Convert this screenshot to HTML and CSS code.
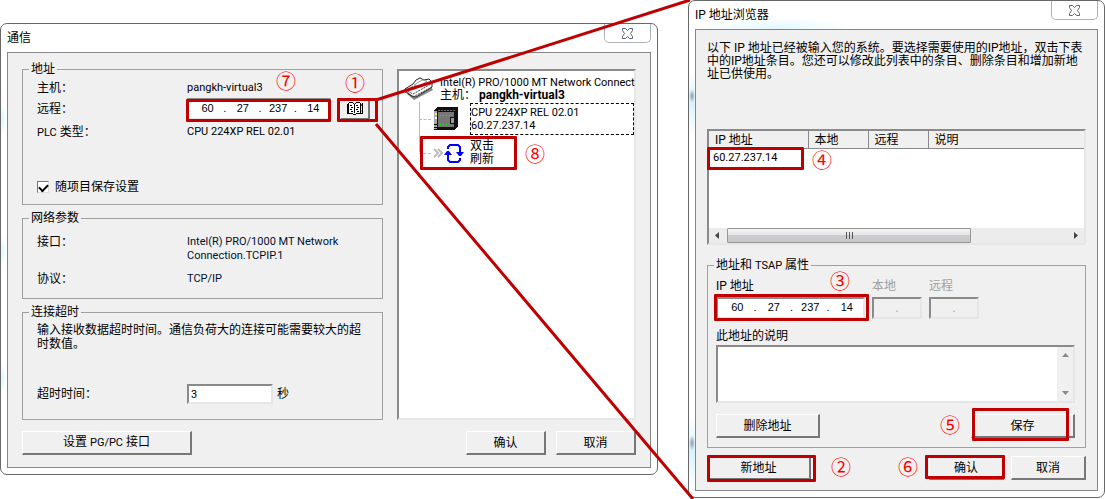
FILE: index.html
```html
<!DOCTYPE html>
<html lang="zh-CN">
<head>
<meta charset="utf-8">
<title>通信</title>
<link rel="stylesheet" href="styles.css">
</head>
<body>
<main class="stage">
  <section class="window window-comm" aria-label="通信">
    <header class="titlebar">
      <h1 class="title">通信</h1>
      <button class="close" type="button" aria-label="关闭">
        <svg width="13" height="11" viewBox="0 0 13 11"><path d="M1.500 .5h3l2 2 2-2h3v2l-2 3 2 3v2h-3l-2-2-2 2h-3v-2l2-3-2-3z" fill="#fff" stroke="#5a6078"/></svg>
      </button>
    </header>
    <div class="body comm-body">
      <div class="comm-columns">
        <div class="groups">
          <fieldset class="group">
            <legend>地址</legend>
            <div class="address-rows">
              <span>主机：</span>
              <span class="host latin">pangkh-virtual3<span class="mark mark-7">⑦</span></span>
              <span>远程：</span>
              <span class="remote">
                <span class="anchor">
                  <span class="sunken ip ip-left">
                    <input aria-label="远程 1" value="60"><i>.</i><input aria-label="远程 2" value="27"><i>.</i><input aria-label="远程 3" value="237"><i>.</i><input aria-label="远程 4" value="14">
                  </span>
                  <span class="frame frame-remote"></span>
                </span>
                <span class="anchor">
                  <button class="btn book" type="button" aria-label="地址簿">
                    <svg width="16" height="13" viewBox="0 0 16 13" shape-rendering="crispEdges"><path d="M2 1h4v1h1v1h1V2h1V1h4v10H9v1H6v-1H2z" fill="#fff"/><path d="M2 0h4v1H2zM9 0h4v1H9zM6 1h1v1H6zM8 1h1v1H8zM7 2h1v9H7zM1 1h1v10H1zM0 2h1v10H0zM13 1h1v10h-1zM0 11h6v1H0zM9 11h6v1H9zM6 12h3v1H6zM3 3h2v1H3zM4 5h2v1H4zM3 7h2v1H3zM4 9h2v1H4zM9 3h2v1H9zM10 5h2v1h-2zM9 7h2v1H9zM10 9h2v1h-2zM15 1h1v11h-1z"/><path d="M14 2h1v2h-1z" fill="red"/><path d="M14 5h1v2h-1z" fill="#ff0"/><path d="M14 8h1v2h-1z" fill="#0ff"/></svg>
                  </button>
                  <span class="frame frame-book"></span>
                  <span class="mark mark-1">①</span>
                </span>
              </span>
              <span><span class="latin">PLC</span> 类型：</span>
              <span class="latin">CPU 224XP REL 02.01</span>
            </div>
            <label class="save-project"><input type="checkbox" checked>随项目保存设置</label>
          </fieldset>
          <fieldset class="group">
            <legend>网络参数</legend>
            <div class="network-rows">
              <span>接口：</span>
              <span class="latin">Intel(R) PRO/1000 MT Network<br>Connection.TCPIP.1</span>
              <span>协议：</span>
              <span class="latin">TCP/IP</span>
            </div>
          </fieldset>
          <fieldset class="group">
            <legend>连接超时</legend>
            <p class="timeout-note">输入接收数据超时时间。通信负荷大的连接可能需要较大的超时数值。</p>
            <div class="timeout-row">
              <label for="timeout">超时时间：</label>
              <input class="sunken timeout latin" id="timeout" value="3">
              <span>秒</span>
            </div>
          </fieldset>
        </div>
        <div class="sunken tree">
          <div class="node node-root">
            <svg width="30" height="24" viewBox="0 0 30 24"><path d="M3 17l7 6 19-10-2-3-15 7z" fill="#888"/><path d="M1 12l8-5 3-4 4-2 4 2 5-1 3 3v5l-16 10-4-1-7-5z" fill="#fff" stroke="#222"/><path d="M1 13l8 4 18-10M1 15l8 5 19-10" fill="none" stroke="#444" stroke-dasharray="2 1"/><path d="M10 8l8-5 5 1-8 6zM4 12l5-3" fill="#fff" stroke="#999"/></svg>
            <div class="root-text"><span class="latin">Intel(R) PRO/1000 MT Network Connect</span><br>主机： <b>pangkh-virtual3</b></div>
          </div>
          <div class="branches">
            <div class="node">
              <svg class="plc" width="26" height="24" viewBox="0 0 26 24" shape-rendering="crispEdges"><path d="M1 3l3-3h21v19l-3 3v1H1z" fill="#111"/><path d="M5 5h16v15H5z" fill="#777"/><path d="M1 4h3v18H1z" fill="#aaa"/><path d="M2 6h2v2H2z" fill="#ff0"/><path d="M2 10h2v2H2z" fill="#fff"/><path d="M1 17h3M1 20h3" stroke="#000"/><path d="M7 8.500h11M7 17.500h11" stroke="#0f0" stroke-dasharray="1 2"/><path d="M5 3.500h17" stroke="#666" stroke-dasharray="2 1"/><path d="M17.500 10.500h4v6h-4z" fill="#999" stroke="#111"/></svg>
              <div class="node-text selected latin">CPU 224XP REL 02.01<br>60.27.237.14</div>
            </div>
            <div class="node node-refresh">
              <svg class="chevrons" width="10" height="10" viewBox="0 0 10 10"><path d="M1 1l4 4-4 4M5 1l4 4-4 4" fill="none" stroke="#bbb" stroke-width="2"/></svg>
              <svg class="refresh" width="20" height="21" viewBox="0 0 20 21" fill="none" stroke="#00f" stroke-width="2"><path d="M4 6V4l2-2h8l2 2v6M16 15v2l-2 2H6l-2-2v-6"/><path d="M12 9h8l-3 4h-2zM0 12h8L5 8H3z" fill="#00f" stroke="none"/></svg>
              <div class="node-text">双击<br>刷新</div>
              <span class="frame frame-refresh"></span>
              <span class="mark mark-8">⑧</span>
            </div>
          </div>
        </div>
      </div>
      <div class="actions">
        <button class="btn btn-pgpc" type="button">设置 <span class="latin">PG/PC</span> 接口</button>
        <button class="btn btn-dialog" type="button">确认</button>
        <button class="btn btn-dialog" type="button">取消</button>
      </div>
    </div>
  </section>

  <section class="window window-ip" aria-label="IP 地址浏览器">
    <header class="titlebar">
      <h1 class="title">IP 地址浏览器</h1>
      <button class="close" type="button" aria-label="关闭">
        <svg width="13" height="11" viewBox="0 0 13 11"><path d="M1.500 .5h3l2 2 2-2h3v2l-2 3 2 3v2h-3l-2-2-2 2h-3v-2l2-3-2-3z" fill="#fff" stroke="#5a6078"/></svg>
      </button>
    </header>
    <div class="body ip-body">
      <p class="intro">以下 IP 地址已经被输入您的系统。要选择需要使用的IP地址，双击下表中的IP地址条目。您还可以修改此列表中的条目、删除条目和增加新地址已供使用。</p>
      <div class="sunken list">
        <table class="addresses">
          <thead><tr><th class="col-ip">IP 地址</th><th class="col-tsap">本地</th><th class="col-tsap">远程</th><th>说明</th></tr></thead>
          <tbody><tr><td class="anchor latin">60.27.237.14<span class="frame frame-row"></span><span class="mark mark-4">④</span></td><td></td><td></td><td></td></tr></tbody>
        </table>
        <div class="hscroll">
          <svg width="18" height="15" viewBox="0 0 18 15"><path d="M10 4v7L6 7.500z" fill="#444"/></svg>
          <div class="track"><div class="thumb"><svg width="9" height="7" viewBox="0 0 9 7"><path d="M1.500 0v7M4.500 0v7M7.500 0v7" stroke="#555"/></svg></div></div>
          <svg width="18" height="15" viewBox="0 0 18 15"><path d="M8 4v7l4-3.500z" fill="#444"/></svg>
        </div>
      </div>
      <fieldset class="group tsap">
        <legend>地址和 <span class="latin">TSAP</span> 属性</legend>
        <div class="tsap-fields">
          <div class="field field-ip anchor">
            <span>IP 地址</span>
            <span class="anchor">
              <span class="sunken ip ip-right">
                <input aria-label="IP 地址 1" value="60"><i>.</i><input aria-label="IP 地址 2" value="27"><i>.</i><input aria-label="IP 地址 3" value="237"><i>.</i><input aria-label="IP 地址 4" value="14">
              </span>
              <span class="frame frame-ip"></span>
            </span>
            <span class="mark mark-3">③</span>
          </div>
          <div class="field field-tsap">
            <label for="local">本地</label>
            <input class="sunken" id="local" value="." disabled>
          </div>
          <div class="field field-tsap">
            <label for="remote">远程</label>
            <input class="sunken" id="remote" value="." disabled>
          </div>
        </div>
        <div class="describe">
          <label for="note">此地址的说明</label>
          <div class="sunken memo">
            <textarea id="note"></textarea>
            <div class="vscroll">
              <svg width="16" height="16" viewBox="0 0 16 16"><path d="M5 10h7L8.500 6z" fill="#888"/></svg>
              <svg width="16" height="16" viewBox="0 0 16 16"><path d="M5 6h7l-3.500 4z" fill="#888"/></svg>
            </div>
          </div>
        </div>
        <div class="row-buttons">
          <button class="btn btn-edit" type="button">删除地址</button>
          <span class="anchor">
            <button class="btn btn-edit" type="button">保存</button>
            <span class="frame frame-save"></span>
            <span class="mark mark-5">⑤</span>
          </span>
        </div>
      </fieldset>
      <div class="ip-actions">
        <span class="anchor anchor-new">
          <button class="btn btn-edit" type="button">新地址</button>
          <span class="frame frame-new"></span>
          <span class="mark mark-2">②</span>
        </span>
        <span class="anchor">
          <button class="btn btn-small" type="button">确认</button>
          <span class="frame frame-ok"></span>
          <span class="mark mark-6">⑥</span>
        </span>
        <button class="btn btn-small" type="button">取消</button>
      </div>
    </div>
  </section>

  <svg class="callout" viewBox="0 0 1105 499" preserveAspectRatio="none" aria-hidden="true">
    <path d="M376 100L690 0M376 124L693 499"/>
  </svg>
</main>
</body>
</html>
```

FILE: styles.css
```css
* {
  box-sizing: border-box;
}

body {
  margin: 0;
  background: #fff;
  color: #000;
  font: 12px/14px Roboto, "Noto Sans CJK SC", sans-serif;
}

button,
input,
textarea {
  margin: 0;
  padding: 0;
  color: inherit;
  font: inherit;
}

p {
  margin: 0;
}

svg {
  display: block;
  flex: none;
}

.stage {
  position: relative;
  display: grid;
  grid-template-columns: minmax(0, 658fr) minmax(0, 417fr);
  column-gap: 30px;
  align-items: start;
  padding-bottom: 1px;
}

/* Windows */
.window {
  padding: 0 6px 6px;
  border: 1px solid #686868;
  border-radius: 7px;
  background: #fff;
}

.window-comm {
  margin-top: 23px;
  background:
    radial-gradient(ellipse at left, #d5f7fb, transparent 70%) 0 78px / 6px 34px no-repeat,
    radial-gradient(ellipse at left, #d5f7fb, transparent 70%) 0 212px / 6px 30px no-repeat,
    radial-gradient(ellipse at left, #d5f7fb, transparent 70%) 0 340px / 6px 28px no-repeat,
    #fff;
}

.window-ip {
  background:
    radial-gradient(ellipse, #8797b0, transparent 70%) 0 88px / 6px 14px no-repeat,
    linear-gradient(transparent, #dcf3fc, transparent) 0 70px / 6px 66px no-repeat,
    radial-gradient(ellipse, #8797b0, transparent 70%) 0 434px / 6px 16px no-repeat,
    linear-gradient(transparent, #d9f3fc, transparent) 0 415px / 6px 72px no-repeat,
    radial-gradient(ellipse, #e3f8fd, transparent 70%) 10px 16px / 156px 22px no-repeat,
    #fff;
}

.titlebar {
  display: flex;
  justify-content: space-between;
  align-items: flex-start;
  height: 28px;
}

.title {
  margin: 0;
  font-size: 12px;
  font-weight: 400;
  line-height: 28px;
}

.close {
  display: grid;
  place-items: center;
  width: 47px;
  height: 19px;
  border: 1px solid #aeb2b8;
  border-top: 0;
  border-radius: 0 0 5px 5px;
  background: #fff;
}

.body {
  border: 1px solid #858585;
  background: #f0f0f0;
}

/* Shared controls */
.latin {
  font-size: 11px;
}

.group {
  min-width: 0;
  margin: 0;
  padding: 0 14px;
  border: 1px solid #a0a0a0;
}

.group legend {
  height: 14px;
  margin-left: -8px;
  padding: 0 2px;
}

.sunken {
  border: 2px solid;
  border-color: #8a8a8a #e6e6e6 #e6e6e6 #8a8a8a;
  border-radius: 0;
  background: #fff;
}

.btn {
  height: 24px;
  border: solid;
  border-width: 1px 2px 2px 1px;
  border-color: #fff #777 #777 #fff;
  background: #f0f0f0;
}

.anchor {
  position: relative;
}

.ip {
  display: flex;
  height: 22px;
  padding-left: 3px;
  font: 11px/16px "Liberation Sans", sans-serif;
}

.ip input {
  flex: 1;
  min-width: 0;
  height: 16px;
  border: 0;
  background: transparent;
  text-align: center;
}

.ip i {
  width: 4px;
  font-style: normal;
}

/* Red annotations */
.frame {
  position: absolute;
  border: 3px solid #c00000;
  border-radius: 1px;
  pointer-events: none;
}

.mark {
  position: absolute;
  color: #f00;
  font: 20px/20px "Noto Sans CJK SC", sans-serif;
}

.callout {
  position: absolute;
  inset: 0;
  width: 100%;
  height: 100%;
  pointer-events: none;
  fill: none;
  stroke: #c00000;
  stroke-width: 3;
}

/* Communication window */
.comm-body {
  padding: 9px 14px 12px;
}

.comm-columns {
  display: grid;
  grid-template-columns: minmax(0, 361fr) minmax(0, 239fr);
  column-gap: 14px;
}

.groups {
  display: flex;
  flex-direction: column;
  gap: 6px;
}

.address-rows {
  display: grid;
  grid-template-columns: 150px 1fr;
  grid-template-rows: 20px 22px 24px;
  align-items: center;
  padding-top: 2px;
}

.host {
  position: relative;
}

.remote {
  display: flex;
  gap: 9px;
}

.ip-left {
  width: 144px;
}

.book {
  display: grid;
  place-items: center;
  width: 30px;
  height: 22px;
}

.save-project {
  display: flex;
  align-items: center;
  gap: 6px;
  height: 18px;
  margin: 34px 0 8px;
}

.save-project input {
  appearance: none;
  width: 12px;
  height: 12px;
  border: 1px solid;
  border-color: #777 #ddd #ddd #777;
  background: #fff;
}

.save-project input:checked::before {
  content: "";
  display: block;
  width: 7px;
  height: 4px;
  margin: 2px 1px;
  border: solid #000;
  border-width: 0 0 2px 2px;
  transform: rotate(-45deg);
}

.network-rows {
  display: grid;
  grid-template-columns: 150px 1fr;
  row-gap: 9px;
  padding: 10px 0 12px;
}

.network-rows .latin {
  color: #001030;
}

.timeout-note {
  padding-top: 4px;
}

.timeout-row {
  display: grid;
  grid-template-columns: 150px 86px auto;
  align-items: center;
  justify-content: start;
  margin: 33px 0 15px;
}

.timeout {
  height: 20px;
  padding: 0 2px;
}

.timeout-row span {
  padding-left: 4px;
}

.tree {
  margin-top: 7px;
  padding-top: 5px;
  line-height: 13px;
  white-space: nowrap;
}

.node {
  position: relative;
  display: flex;
  align-items: center;
}

.node-root {
  gap: 6px;
  padding-left: 5px;
}

.branches {
  margin-left: 20px;
  padding-left: 14px;
  background: linear-gradient(#bbb, #bbb) 0 0 / 1px 50px no-repeat;
}

.plc {
  margin-right: 11px;
}

.branches .node::before {
  content: "";
  position: absolute;
  left: -14px;
  top: 50%;
  width: 12px;
  border-top: 1px dashed #bbb;
}

.node-text {
  flex: 1;
}

.selected {
  padding: 2px 0;
  border: 1px dashed #000;
  margin: 1px 0;
}

.node-refresh {
  margin-top: 4px;
}

.chevrons {
  margin-right: 1px;
}

.refresh {
  margin-right: 6px;
}

.actions {
  display: flex;
  gap: 10px;
  padding-top: 11px;
}

.btn-pgpc {
  width: 170px;
  margin-right: auto;
}

.btn-dialog {
  width: 80px;
}

/* IP address browser */
.ip-body {
  padding: 12px 11px 10px;
}

.intro {
  line-height: 13px;
}

.list {
  display: flex;
  flex-direction: column;
  height: 116px;
  margin-top: 48px;
}

.addresses {
  width: 100%;
  border-collapse: collapse;
  table-layout: fixed;
}

.addresses th {
  height: 17px;
  padding: 1px 0 0 6px;
  border: solid #8a8a8a;
  border-width: 0 1px 1px 0;
  background: #f0f0f0;
  font-weight: 400;
  text-align: left;
}

.addresses th:last-child {
  border-right: 0;
}

.addresses td {
  height: 20px;
  padding: 0 0 0 4px;
}

.col-ip {
  width: 99px;
}

.col-tsap {
  width: 60px;
}

.hscroll {
  display: flex;
  margin-top: auto;
  background: #ececec;
}

.track {
  flex: 1;
}

.thumb {
  display: grid;
  place-items: center;
  width: 72%;
  height: 15px;
  border: 1px solid #979797;
  border-radius: 1px;
  background: linear-gradient(#f4f4f4, #e4e4e6 45%, #cdcdd0 50%, #c8c8cc);
}

.tsap {
  margin-top: 13px;
  padding: 0 10px 9px 8px;
}

.tsap legend {
  margin-left: -2px;
}

.tsap-fields {
  display: flex;
  gap: 7px;
  padding-top: 7px;
}

.field {
  display: flex;
  flex-direction: column;
  gap: 4px;
}

.field-ip {
  width: 149px;
}

.ip-right {
  width: 149px;
}

.field-tsap {
  width: 50px;
  color: #a0a0a0;
}

.field-tsap .sunken {
  width: 100%;
  height: 22px;
  background: #f0f0f0;
  text-align: center;
}

.describe {
  display: flex;
  flex-direction: column;
  gap: 2px;
  padding-top: 10px;
}

.memo {
  display: flex;
  height: 58px;
}

.memo textarea {
  flex: 1;
  min-width: 0;
  border: 0;
  resize: none;
}

.vscroll {
  display: flex;
  flex-direction: column;
  justify-content: space-between;
  background: #f0f0f0;
}

.row-buttons {
  display: flex;
  justify-content: space-between;
  padding-top: 11px;
}

.btn-edit {
  display: block;
  width: 104px;
}

.btn-small {
  display: block;
  width: 75px;
}

.ip-actions {
  display: flex;
  gap: 7px;
  padding-top: 8px;
}

.anchor-new {
  margin-right: auto;
}

/* Annotation placement around each control */
.frame-remote { inset: 1px 0 -2px -1px; }
.frame-book { inset: 0 -8px -2px -3px; }
.frame-refresh { inset: -4px 117px -4px -13px; }
.frame-row { inset: -2px 4px -2px -2px; }
.frame-ip { inset: -3px -4px -2px -2px; }
.frame-save { inset: -6px 6px -3px 1px; }
.frame-new { inset: -1px -5px -2px 0; }
.frame-ok { inset: -1px -1px 1px -4px; }

.mark-7 { left: 89px; top: -10px; }
.mark-1 { left: 5px; top: -25px; }
.mark-8 { right: 89px; top: 4px; }
.mark-4 { left: 103px; top: 1px; }
.mark-3 { left: 114px; top: -8px; }
.mark-5 { left: -31px; top: 1px; }
.mark-2 { left: 124px; top: 1px; }
.mark-6 { left: -31px; top: 1px; }
```
